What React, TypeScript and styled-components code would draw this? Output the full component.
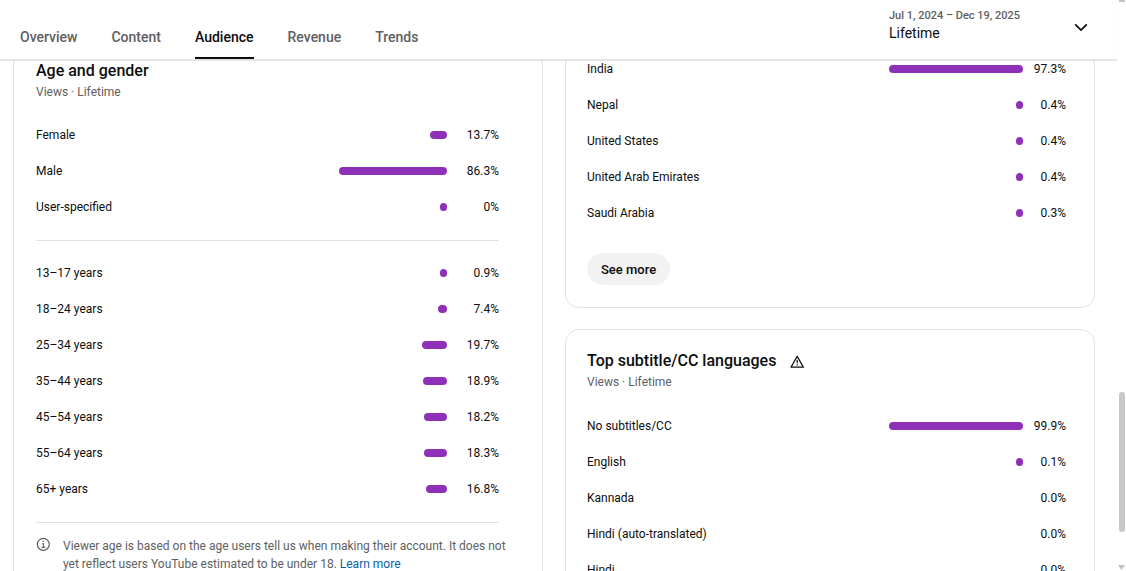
import React from "react";
import styled, { createGlobalStyle } from "styled-components";

const GlobalStyle = createGlobalStyle`
  *, *::before, *::after { box-sizing: border-box; }
  body {
    margin: 0;
    background: #fff;
    color: #0d0d0d;
    font-family: Roboto, "Liberation Sans", sans-serif;
    font-size: 12px;
    overflow: hidden;
  }
  h2, p { margin: 0; }
  button { font-family: inherit; cursor: pointer; }
`;

const Page = styled.div`
  display: flex;
  height: 100vh;
`;

const Main = styled.div`
  flex: 1;
  min-width: 0;
  display: flex;
  flex-direction: column;
`;

const Header = styled.header`
  position: relative;
  z-index: 1;
  flex: none;
  display: flex;
  justify-content: space-between;
  height: 60px;
  padding-left: 20px;
  padding-right: 28px;
  background: #fff;
  border-bottom: 1px solid #e4e4e4;
  box-shadow: 0 1px 1px rgba(0, 0, 0, 0.1);
`;

const Tabs = styled.nav`
  display: flex;
  align-items: flex-end;
  gap: 34px;
`;

const Tab = styled.a<{ $active?: boolean }>`
  height: 44px;
  border-bottom: 2px solid ${(p) => (p.$active ? "#0d0d0d" : "transparent")};
  color: ${(p) => (p.$active ? "#0d0d0d" : "#606060")};
  font-size: 14px;
  font-weight: 500;
  line-height: 44px;
  text-decoration: none;
`;

const PeriodPicker = styled.button`
  display: flex;
  justify-content: space-between;
  align-items: center;
  width: 200px;
  height: 54px;
  padding: 0;
  border: 0;
  background: none;
  color: #0d0d0d;
  text-align: left;
`;

const PeriodText = styled.span`
  display: flex;
  flex-direction: column;
  height: 100%;
  padding-top: 8px;
`;

const PeriodRange = styled.span`
  color: #606060;
  font-size: 11px;
  font-weight: 500;
  line-height: 16px;
`;

const PeriodName = styled.span`
  font-size: 14px;
  line-height: 18px;
`;

const Viewport = styled.main`
  flex: 1;
  min-height: 0;
  overflow: hidden;
`;

const Columns = styled.div`
  display: grid;
  grid-template-columns: 1fr 1fr;
  gap: 22px;
  margin-top: -10px;
  padding: 0 22px 0 13px;
`;

const Column = styled.div`
  display: flex;
  flex-direction: column;
  gap: 21px;
`;

const Card = styled.section<{ $scrolled?: boolean; $wide?: boolean }>`
  padding: ${(p) => (p.$scrolled ? "0" : "21px")} ${(p) => (p.$wide ? "28px" : "43px")} 22px ${(p) => (p.$wide ? "21px" : "22px")};
  border: 1px solid #e2e2e2;
  border-radius: 14px;
`;

const CardHead = styled.div<{ $scrolled?: boolean }>`
  padding-top: ${(p) => (p.$scrolled ? "10px" : "0")};
  margin-bottom: ${(p) => (p.$scrolled ? "17px" : "18px")};
`;

const Title = styled.h2`
  display: flex;
  align-items: center;
  gap: 14px;
  font-size: 16px;
  font-weight: 500;
  line-height: 20px;
`;

const Subtitle = styled.p`
  margin-top: 3px;
  color: #606060;
  font-size: 12px;
  line-height: 16px;
`;

const Table = styled.table`
  width: 100%;
  border-collapse: collapse;
`;

const Label = styled.th`
  height: 36px;
  padding: 0;
  font-weight: 400;
  text-align: left;
`;

const TrackCell = styled.td<{ $track: number }>`
  width: ${(p) => p.$track}px;
  padding: 0;
`;

const Bar = styled.div`
  min-width: 7px;
  height: 8px;
  margin-left: auto;
  border-radius: 4px;
  background: #8e30b8;
`;

const Value = styled.td<{ $wide?: boolean }>`
  width: ${(p) => (p.$wide ? 43 : 52)}px;
  padding: 0;
  text-align: right;
`;

const Divider = styled.hr`
  height: 1px;
  margin: 15px 0 14px;
  border: 0;
  background: #e2e2e2;
`;

const Note = styled.div`
  display: flex;
  gap: 12px;
  margin-right: -20px;
  color: #606060;
  line-height: 18px;

  svg { flex: none; }
  a { color: #065fa8; text-decoration: none; }
`;

const MoreButton = styled.button`
  height: 32px;
  margin-top: 22px;
  padding: 0 14px;
  border: 0;
  border-radius: 16px;
  background: #f2f2f2;
  color: #0d0d0d;
  font-size: 13px;
  font-weight: 500;
`;

const Rail = styled.div`
  flex: none;
  display: flex;
  flex-direction: column;
  align-items: flex-end;
  width: 9px;
  padding-right: 1px;
`;

const RailCap = styled.div`
  width: 6px;
  height: 2px;
  background: #c4c4c4;
`;

const RailSpace = styled.div<{ $grow: number }>`
  flex: ${(p) => p.$grow} 1 0;
`;

const Thumb = styled.div`
  flex: 140 1 0;
  width: 6px;
  border-radius: 3px;
  background: #c8c8c8;
`;

type Item = { label: string; value: string; fill?: number };

const gender: Item[] = [
  { label: "Female", value: "13.7%", fill: 13.7 },
  { label: "Male", value: "86.3%", fill: 86.3 },
  { label: "User-specified", value: "0%", fill: 0 },
];

const ages: Item[] = [
  { label: "13–17 years", value: "0.9%", fill: 0.9 },
  { label: "18–24 years", value: "7.4%", fill: 7.4 },
  { label: "25–34 years", value: "19.7%", fill: 19.7 },
  { label: "35–44 years", value: "18.9%", fill: 18.9 },
  { label: "45–54 years", value: "18.2%", fill: 18.2 },
  { label: "55–64 years", value: "18.3%", fill: 18.3 },
  { label: "65+ years", value: "16.8%", fill: 16.8 },
];

const countries: Item[] = [
  { label: "India", value: "97.3%", fill: 100 },
  { label: "Nepal", value: "0.4%", fill: 0.4 },
  { label: "United States", value: "0.4%", fill: 0.4 },
  { label: "United Arab Emirates", value: "0.4%", fill: 0.4 },
  { label: "Saudi Arabia", value: "0.3%", fill: 0.3 },
];

const languages: Item[] = [
  { label: "No subtitles/CC", value: "99.9%", fill: 100 },
  { label: "English", value: "0.1%", fill: 0.1 },
  { label: "Kannada", value: "0.0%" },
  { label: "Hindi (auto-translated)", value: "0.0%" },
  { label: "Hindi", value: "0.0%" },
];

function Breakdown({ items, wide }: { items: Item[]; wide?: boolean }) {
  return (
    <Table>
      <tbody>
        {items.map((item) => (
          <tr key={item.label}>
            <Label scope="row">{item.label}</Label>
            <TrackCell $track={wide ? 134 : 125}>
              {item.fill !== undefined && <Bar style={{ width: `${item.fill}%` }} />}
            </TrackCell>
            <Value $wide={wide}>{item.value}</Value>
          </tr>
        ))}
      </tbody>
    </Table>
  );
}

const tabs = ["Overview", "Content", "Audience", "Revenue", "Trends"];

export default function App() {
  return (
    <Page>
      <GlobalStyle />
      <Main>
        <Header>
          <Tabs>
            {tabs.map((tab) => (
              <Tab key={tab} href="#" $active={tab === "Audience"}>{tab}</Tab>
            ))}
          </Tabs>
          <PeriodPicker>
            <PeriodText>
              <PeriodRange>Jul 1, 2024 – Dec 19, 2025</PeriodRange>
              <PeriodName>Lifetime</PeriodName>
            </PeriodText>
            <svg width="16" height="16" viewBox="0 0 16 16" fill="none" stroke="#0d0d0d" strokeWidth="1.8" aria-hidden="true">
              <path d="M2.2 5.3 8 11.1l5.8-5.8" />
            </svg>
          </PeriodPicker>
        </Header>
        <Viewport>
          <Columns>
            <Card $scrolled>
              <CardHead $scrolled>
                <Title>Age and gender</Title>
                <Subtitle>Views · Lifetime</Subtitle>
              </CardHead>
              <Breakdown items={gender} />
              <Divider />
              <Breakdown items={ages} />
              <Divider />
              <Note>
                <svg width="15" height="15" viewBox="0 0 15 15" fill="none" stroke="#606060" aria-hidden="true">
                  <circle cx="7.3" cy="7.3" r="6" strokeWidth="1.2" />
                  <path d="M5.9 6.7h1.6v3.4M5.5 10.4h3.8" strokeWidth="1.1" />
                  <circle cx="7.2" cy="4.3" r="0.8" fill="#606060" stroke="none" />
                </svg>
                <p>
                  Viewer age is based on the age users tell us when making their account. It does not
                  yet reflect users YouTube estimated to be under 18. <a href="#">Learn more</a>
                </p>
              </Note>
            </Card>
            <Column>
              <Card $scrolled $wide>
                <Breakdown items={countries} wide />
                <MoreButton>See more</MoreButton>
              </Card>
              <Card $wide>
                <CardHead>
                  <Title>
                    Top subtitle/CC languages
                    <svg width="15" height="15" viewBox="0 0 15 15" fill="none" stroke="#0d0d0d" aria-hidden="true">
                      <path d="M7.2 2.2 13.4 13.2H1Z" strokeWidth="1.3" strokeLinejoin="round" />
                      <path d="M7.2 5.8v3.5M7.2 10.3v1.3" strokeWidth="1.2" />
                    </svg>
                  </Title>
                  <Subtitle>Views · Lifetime</Subtitle>
                </CardHead>
                <Breakdown items={languages} wide />
              </Card>
            </Column>
          </Columns>
        </Viewport>
      </Main>
      <Rail aria-hidden="true">
        <RailCap />
        <RailSpace $grow={390} />
        <Thumb />
        <RailSpace $grow={32} />
        <svg width="7" height="7" viewBox="0 0 7 7">
          <path d="M0 1h7L3.5 6Z" fill="#c0c0c0" />
        </svg>
      </Rail>
    </Page>
  );
}
